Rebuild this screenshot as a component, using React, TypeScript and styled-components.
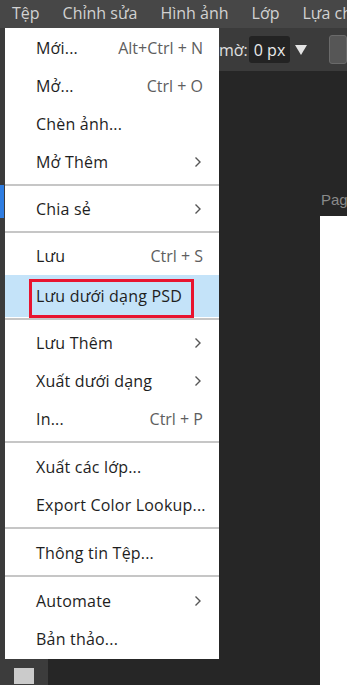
import React from "react";
import styled, { createGlobalStyle } from "styled-components";

const Global = createGlobalStyle`
  html, body { margin: 0; padding: 0; background: #262626; }
  body { width: 347px; height: 685px; overflow: hidden; font-family: "Open Sans", "Noto Sans", sans-serif; }
`;

const Screen = styled.div`
  position: relative;
  width: 347px;
  height: 685px;
  display: flex;
  flex-direction: column;
  background: #262626;
  overflow: hidden;
`;

const MenuBar = styled.div`
  height: 28px;
  flex: none;
  background: #474747;
  display: flex;
  align-items: center;
  gap: 23px;
  padding-left: 12px;
  white-space: nowrap;
  font-size: 16px;
  color: #d2d2d2;
  overflow: hidden;
`;

const MenuBarItem = styled.span`
  line-height: 22px;
  padding-bottom: 3px;
`;

const Toolbar = styled.div`
  height: 43px;
  flex: none;
  background: #3b3b3b;
  display: flex;
  align-items: center;
  padding-left: 219px;
  gap: 1px;
  white-space: nowrap;
  color: #e0e0e0;
  font-size: 16px;
`;

const ToolLabel = styled.span`
  width: 30px;
`;

const ToolInput = styled.div`
  width: 47px;
  height: 27px;
  padding-left: 5px;
  background: #232323;
  border-radius: 3px;
  display: flex;
  align-items: center;
  color: #eaeaea;
`;

const Caret = styled.svg`
  margin-left: 4px;
  flex: none;
`;

const ToolBox = styled.div`
  margin-left: 21px;
  width: 20px;
  height: 27px;
  background: #565656;
  border: 1px solid #6a6a6a;
  border-radius: 3px;
`;

const Body = styled.div`
  flex: 1;
  display: flex;
`;

const LeftRail = styled.div`
  width: 48px;
  flex: none;
  display: flex;
  flex-direction: column;
`;

const RailStrip = styled.div`
  flex: 1;
  width: 5px;
  background: #3b3b3b;
  display: flex;
  flex-direction: column;
  padding-top: 114px;
`;

const RailMark = styled.div`
  width: 4px;
  height: 33px;
  background: #2f7de1;
`;

const RailPanel = styled.div`
  height: 27px;
  background: #3c3c3c;
  display: flex;
  align-items: flex-start;
  padding: 10px 0 0 14px;
  box-sizing: border-box;
`;

const RailSwatch = styled.div`
  width: 20px;
  height: 16px;
  background: #cbcbcb;
`;

const Canvas = styled.div`
  flex: 1;
  display: flex;
  justify-content: flex-end;
`;

const PageColumn = styled.div`
  width: 27px;
  display: flex;
  flex-direction: column;
  padding-top: 120px;
`;

const PageLabel = styled.div`
  height: 25px;
  font-family: "Liberation Sans", Arial, sans-serif;
  font-size: 15px;
  color: #8a8a8a;
  padding-left: 1px;
  white-space: nowrap;
  overflow: hidden;
`;

const Page = styled.div`
  flex: 1;
  background: #ffffff;
`;

const Menu = styled.div`
  position: absolute;
  left: 5px;
  top: 28px;
  width: 214px;
  background: #ffffff;
  padding: 1px 0 1px;
  display: flex;
  flex-direction: column;
  font-size: 16px;
  letter-spacing: 0.2px;
  color: #1e1e1e;
  box-sizing: border-box;
`;

const Item = styled.div<{ $h?: number; $active?: boolean }>`
  height: ${(p) => p.$h ?? 38}px;
  display: flex;
  align-items: center;
  justify-content: space-between;
  padding: 0 16px 0 31px;
  background: ${(p) => (p.$active ? "#c4e3f9" : "transparent")};
  white-space: nowrap;
  position: relative;
`;

const Shortcut = styled.span`
  color: #5e5e5e;
  letter-spacing: 0;
`;

const Arrow = styled.svg`
  margin-right: 1px;
`;

const Separator = styled.div<{ $top?: number; $bottom?: number }>`
  height: 2px;
  background: #c6c6c6;
  margin: ${(p) => p.$top ?? 3}px 0 ${(p) => p.$bottom ?? 4}px;
`;

const Highlight = styled.div`
  position: absolute;
  left: 24px;
  top: 4px;
  width: 165px;
  height: 39px;
  border: 3px solid #e8142f;
  box-sizing: border-box;
  pointer-events: none;
`;

const Chevron = () => (
  <Arrow width="8" height="12" viewBox="0 0 8 12">
    <path d="M1.5 1.5 L6 6 L1.5 10.5" fill="none" stroke="#555" strokeWidth="1.4" />
  </Arrow>
);

export default function App() {
  return (
    <>
      <Global />
      <Screen>
        <MenuBar>
          <MenuBarItem>Tệp</MenuBarItem>
          <MenuBarItem>Chỉnh sửa</MenuBarItem>
          <MenuBarItem>Hình ảnh</MenuBarItem>
          <MenuBarItem>Lớp</MenuBarItem>
          <MenuBarItem>Lựa chọn</MenuBarItem>
        </MenuBar>
        <Toolbar>
          <ToolLabel>mờ:</ToolLabel>
          <ToolInput>0 px</ToolInput>
          <Caret width="12" height="12" viewBox="0 0 12 12">
            <path d="M0 1 H12 L6 11 Z" fill="#e4e4e4" />
          </Caret>
          <ToolBox />
        </Toolbar>
        <Body>
          <LeftRail>
            <RailStrip>
              <RailMark />
            </RailStrip>
            <RailPanel>
              <RailSwatch />
            </RailPanel>
          </LeftRail>
          <Canvas>
            <PageColumn>
              <PageLabel>Pag</PageLabel>
              <Page />
            </PageColumn>
          </Canvas>
        </Body>
        <Menu>
          <Item>
            <span>Mới...</span>
            <Shortcut>Alt+Ctrl + N</Shortcut>
          </Item>
          <Item>
            <span>Mở...</span>
            <Shortcut>Ctrl + O</Shortcut>
          </Item>
          <Item>
            <span>Chèn ảnh...</span>
          </Item>
          <Item>
            <span>Mở Thêm</span>
            <Chevron />
          </Item>
          <Separator />
          <Item>
            <span>Chia sẻ</span>
            <Chevron />
          </Item>
          <Separator />
          <Item>
            <span>Lưu</span>
            <Shortcut>Ctrl + S</Shortcut>
          </Item>
          <Item $h={42} $active>
            <span>Lưu dưới dạng PSD</span>
            <Highlight />
          </Item>
          <Separator $top={1} $bottom={4} />
          <Item>
            <span>Lưu Thêm</span>
            <Chevron />
          </Item>
          <Item>
            <span>Xuất dưới dạng</span>
            <Chevron />
          </Item>
          <Item>
            <span>In...</span>
            <Shortcut>Ctrl + P</Shortcut>
          </Item>
          <Separator $bottom={5} />
          <Item>
            <span>Xuất các lớp...</span>
          </Item>
          <Item>
            <span>Export Color Lookup...</span>
          </Item>
          <Separator $bottom={5} />
          <Item>
            <span>Thông tin Tệp...</span>
          </Item>
          <Separator $bottom={5} />
          <Item>
            <span>Automate</span>
            <Chevron />
          </Item>
          <Item>
            <span>Bản thảo...</span>
          </Item>
        </Menu>
      </Screen>
    </>
  );
}
